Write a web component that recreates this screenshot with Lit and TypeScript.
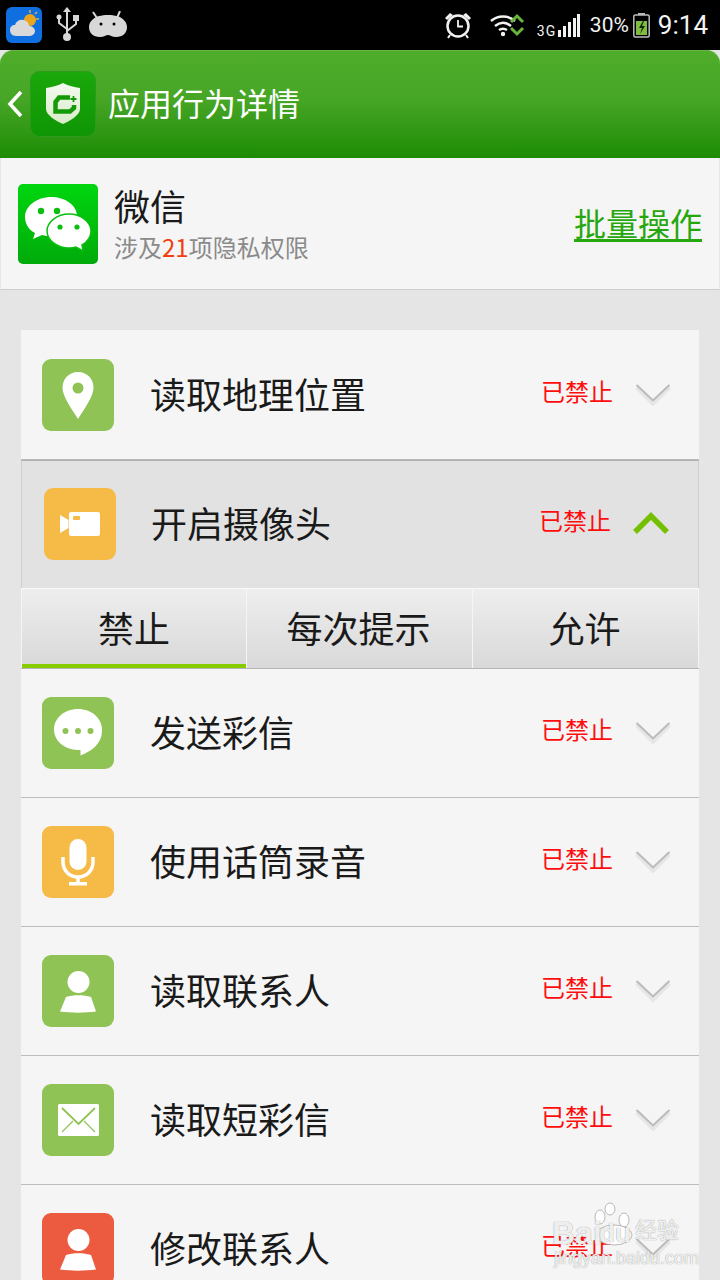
import { LitElement, css, html, svg } from "lit";
import { customElement } from "lit/decorators.js";

const GREEN = "#90c355";
const ORANGE = "#f6bb47";
const RED = "#ec5a3f";

const pinIcon = svg`<path d="M36 13c-9 0-15.500 7-15.500 15.500C20.500 38 30 50 36 60c6-10 15.500-22 15.500-31.500C51.500 20 45 13 36 13z" fill="#fff"/><circle cx="36" cy="29" r="5.500" fill="${GREEN}"/>`;
const cameraIcon = svg`<path d="M16 27l8.500 5v8L16 45z" fill="#fff"/><rect x="25" y="24" width="31" height="24" rx="2" fill="#fff"/><rect x="29" y="28" width="7" height="4" rx="1" fill="${ORANGE}"/>`;
const chatIcon = svg`<path d="M36 12c-13.500 0-24 9-24 20.500 0 11 10 20 24 20.500l2.500 0 0 5.500c6-2.500 12.500-6 16-10.500 3.500-4 5.500-8 5.500-15.500C60 21 49.500 12 36 12z" fill="#fff"/><circle cx="23.500" cy="34" r="3" fill="${GREEN}"/><circle cx="36" cy="34" r="3" fill="${GREEN}"/><circle cx="48.500" cy="34" r="3" fill="${GREEN}"/>`;
const micIcon = svg`<rect x="27.500" y="13" width="17" height="31" rx="8.500" fill="#fff"/><path d="M21 31v5c0 8.500 6.500 15 15 15s15-6.500 15-15v-5" fill="none" stroke="#fff" stroke-width="3.500"/><path d="M36 51v8" stroke="#fff" stroke-width="3.500"/><rect x="27" y="56" width="18" height="3.500" fill="#fff"/>`;
const personIcon = svg`<circle cx="36.500" cy="27" r="11" fill="#fff"/><path d="M24 42c7-2.500 18-2.500 25 0l5 14.500c-11 1.500-25 1.500-36 0z" fill="#fff"/>`;
const mailIcon = svg`<rect x="16" y="20" width="41" height="32" rx="1.500" fill="#fff"/><path d="M20 24l16.500 16L53 24" fill="none" stroke="${GREEN}" stroke-width="1.800"/><path d="M20 48l11-11M53 48L42 37" fill="none" stroke="${GREEN}" stroke-width="1.200"/>`;

interface Perm {
  label: string;
  color: string;
  icon: unknown;
}

const before: Perm = { label: "读取地理位置", color: GREEN, icon: pinIcon };
const open: Perm = { label: "开启摄像头", color: ORANGE, icon: cameraIcon };
const after: Perm[] = [
  { label: "发送彩信", color: GREEN, icon: chatIcon },
  { label: "使用话筒录音", color: ORANGE, icon: micIcon },
  { label: "读取联系人", color: GREEN, icon: personIcon },
  { label: "读取短彩信", color: GREEN, icon: mailIcon },
  { label: "修改联系人", color: RED, icon: personIcon },
];

@customElement("app-root")
export class AppRoot extends LitElement {
  static styles = css`
    :host {
      display: block;
      width: 720px;
      height: 1280px;
      overflow: hidden;
      position: relative;
      background: #e5e5e5;
      font-family: "Noto Sans CJK SC", "Liberation Sans", sans-serif;
      color: #1a1a1a;
    }
    svg {
      display: block;
      flex: none;
    }

    .status {
      height: 50px;
      background: #000;
      display: flex;
      align-items: center;
      color: #f2f2f2;
      font-family: Roboto, "Liberation Sans", sans-serif;
    }
    .usb {
      margin-left: 13px;
    }
    .droid {
      margin-left: 9px;
    }
    .alarm {
      margin-left: auto;
    }
    .wifi {
      margin-left: 18px;
    }
    .net {
      font-size: 14px;
      width: 20px;
      margin-left: 11px;
      margin-top: 12px;
      letter-spacing: 1px;
      line-height: 14px;
    }
    .bars {
      margin-left: 1px;
    }
    .pct {
      font-size: 21px;
      margin-left: 10px;
    }
    .batt {
      margin-left: 4px;
    }
    .clock {
      font-size: 26px;
      margin-left: 8px;
      margin-right: 12px;
    }

    .title-bar {
      height: 108px;
      box-sizing: border-box;
      border-radius: 14px 14px 0 0;
      background: linear-gradient(#4fad2b, #47a626 45%, #1d8c05);
      box-shadow: inset 0 1px 0 #62b83f;
      display: flex;
      align-items: center;
      padding-left: 7px;
      color: #fff;
      font-size: 32px;
    }
    .title-bar span {
      margin-bottom: 4px;
    }
    .shield {
      margin-left: 6px;
      margin-right: 12px;
    }

    .app {
      height: 132px;
      box-sizing: border-box;
      background: #f5f5f5;
      border-left: 1px solid #e6e6e6;
      border-right: 1px solid #e6e6e6;
      border-bottom: 1px solid #cfcfcf;
      display: flex;
      align-items: center;
      padding: 0 17px;
    }
    .app-text {
      margin-left: 16px;
      flex: 1;
    }
    .app-name {
      font-size: 36px;
      line-height: 44px;
      margin-top: -3px;
    }
    .app-sub {
      font-size: 24px;
      line-height: 30px;
      color: #8a8a8a;
      margin-top: 5px;
    }
    .app-sub b {
      font-weight: 400;
      color: #f0400f;
    }
    .bulk {
      font-size: 32px;
      color: #27a70e;
      text-decoration: underline;
      text-underline-offset: 3px;
      margin-bottom: 4px;
    }

    .list {
      margin: 40px 21px 0;
    }
    .row {
      height: 129px;
      box-sizing: border-box;
      background: #f5f5f5;
      border-bottom: 1px solid #bdbdbd;
      display: flex;
      align-items: center;
      padding-left: 21px;
      padding-right: 28px;
    }
    .row.first {
      height: 130px;
      padding-top: 1px;
      border-bottom: 1px solid #b8b8b8;
    }
    .row.expanded {
      height: 128px;
      background: #e2e2e2;
      border-top: 1px solid #b0b0b0;
      border-bottom: none;
      border-left: 1px solid #cfcfcf;
      border-right: 1px solid #cfcfcf;
      padding-left: 22px;
      padding-right: 29px;
      padding-bottom: 1px;
    }
    .badge {
      width: 72px;
      height: 72px;
      border-radius: 9px;
      flex: none;
    }
    .label {
      flex: 1;
      margin-left: 36px;
      margin-bottom: 4px;
      font-size: 36px;
      line-height: 48px;
    }
    .expanded .label {
      margin-left: 35px;
    }
    .state {
      font-size: 24px;
      line-height: 30px;
      color: #ff0d0d;
      margin-right: 22px;
      margin-bottom: 9px;
    }
    .chev {
      margin-bottom: 2px;
    }

    .tabs {
      height: 81px;
      box-sizing: border-box;
      display: grid;
      grid-template-columns: 224px 225px 1fr;
      gap: 1px;
      padding: 0 1px;
      background: #f5f5f5;
      border-bottom: 1px solid #b5b5b5;
    }
    .tab {
      box-sizing: border-box;
      background: linear-gradient(#eeeeee, #d9d9d9);
      border-top: 1px solid #fafafa;
      display: flex;
      align-items: center;
      justify-content: center;
      font-size: 36px;
      padding-bottom: 3px;
      padding-right: 2px;
    }
    .tab.on {
      border-bottom: 4px solid #88cc00;
      padding-bottom: 0;
      padding-right: 0;
    }

    .mark {
      position: absolute;
      left: 551px;
      top: 1200px;
      width: 135px;
      height: 78px;
      color: rgba(255, 255, 255, 0.9);
      text-shadow: 0 0 1px rgba(110, 110, 110, 0.9);
      font-family: "Liberation Sans", "Noto Sans CJK SC", sans-serif;
    }
    .mark svg {
      position: absolute;
      left: 34px;
      top: 2px;
    }
    .mark span {
      position: absolute;
      white-space: nowrap;
    }
    .mark-bai {
      left: 1px;
      top: 15px;
      font-size: 32px;
      line-height: 36px;
      font-weight: 700;
    }
    .mark-du {
      left: 48px;
      top: 18px;
      font-size: 26px;
      line-height: 30px;
      font-weight: 700;
    }
    .mark-jy {
      left: 84px;
      top: 16px;
      font-size: 22px;
      line-height: 30px;
    }
    .mark-url {
      left: 3px;
      top: 47px;
      font-size: 18px;
      line-height: 22px;
    }
  `;

  private badge(p: Perm) {
    return html`<svg class="badge" style="background:${p.color}" viewBox="0 0 72 72">${p.icon}</svg>`;
  }

  private chevron(up: boolean) {
    if (up) {
      return html`<svg class="chev" width="36" height="24" viewBox="0 0 36 24">
        <path d="M2 21L18 5l16 16" fill="none" stroke="#74c000" stroke-width="5.500" />
      </svg>`;
    }
    return html`<svg class="chev" width="36" height="24" viewBox="0 0 36 24">
      <path d="M2 5l16 16L34 5" fill="none" stroke="#e6e6e6" stroke-width="5" />
      <path d="M1.500 3L18 18.500 34.500 3" fill="none" stroke="#bcbcbc" stroke-width="2" />
    </svg>`;
  }

  private row(p: Perm, cls = "") {
    const up = cls === "expanded";
    return html`<div class="row ${cls}">
      ${this.badge(p)}
      <span class="label">${p.label}</span>
      <span class="state">已禁止</span>
      ${this.chevron(up)}
    </div>`;
  }

  render() {
    return html`
      <div class="status">
        <svg width="36" height="36" viewBox="0 0 36 36" style="margin-left:6px">
          <rect width="36" height="36" rx="6" fill="#0f6fe0" />
          <circle cx="24" cy="13" r="6" fill="#eba51c" />
          <path d="M24 3v3M33 12h-3M31 5l-2 2" stroke="#d9b04a" stroke-width="1.500" />
          <path d="M10 29c-4 0-6-3-6-6 0-3 2-5 5-5 1-4 5-6 9-5 3 1 5 3 5 6 3 0 6 2 6 5s-3 5-6 5z" fill="#d9d9d9" />
        </svg>
        <svg class="usb" width="25" height="36" viewBox="0 0 25 36">
          <path d="M12 5v24M12 22L4 16v-4M12 24l9-7v-5" fill="none" stroke="#d8d8d8" stroke-width="2" />
          <path d="M12 0l4 5H8z" fill="#d8d8d8" />
          <circle cx="4" cy="10" r="2.500" fill="#d8d8d8" />
          <rect x="18" y="8" width="6" height="6" fill="#d8d8d8" />
          <circle cx="12" cy="30" r="4" fill="#d8d8d8" />
        </svg>
        <svg class="droid" width="38" height="28" viewBox="0 0 38 28">
          <path d="M4 1l4 6M31 0l-3 7" stroke="#d8d8d8" stroke-width="2" />
          <path d="M10 5c5-1.500 13-1.500 18 0 6 2 10 6 10 11 0 6-4 10-11 10-4 0-6-2-8-2s-4 2-8 2C4 26 0 22 0 16 0 11 4 7 10 5z" fill="#d8d8d8" />
          <circle cx="12" cy="13" r="1.500" fill="#000" />
          <circle cx="25" cy="13" r="1.500" fill="#000" />
        </svg>
        <svg class="alarm" width="28" height="28" viewBox="0 0 28 28">
          <circle cx="14" cy="15" r="10.500" fill="none" stroke="#f2f2f2" stroke-width="2.500" />
          <path d="M14 9v6.500h5" fill="none" stroke="#f2f2f2" stroke-width="1.800" />
          <path d="M1 7l5-5 3 2-6 5zM27 7l-5-5-3 2 6 5z" fill="#f2f2f2" />
          <path d="M6 24l-2 3M22 24l2 3" stroke="#f2f2f2" stroke-width="2" />
        </svg>
        <svg class="wifi" width="36" height="24" viewBox="0 0 36 24">
          <path d="M1 8c7-6 17-6 24 0M5 13c5-4 11-4 16 0M9 17c3-2 5-2 8 0" fill="none" stroke="#f2f2f2" stroke-width="2.500" />
          <circle cx="13" cy="21" r="2.200" fill="#f2f2f2" />
          <path d="M21 9l6-6 6 6M21 15l6 6 6-6" fill="none" stroke="#67b53a" stroke-width="3" />
        </svg>
        <span class="net">3G</span>
        <svg class="bars" width="22" height="24" viewBox="0 0 22 24">
          <path d="M0 17h3v7H0zM5 13h3v11H5zM10 9h3v15h-3zM15 5h3v19h-3zM19 1h3v23h-3z" fill="#f2f2f2" />
        </svg>
        <span class="pct">30%</span>
        <svg class="batt" width="17" height="26" viewBox="0 0 17 26">
          <path d="M5 1h7v2H5z" fill="#bdbdbd" />
          <rect x="0.800" y="3" width="15.400" height="22" rx="1.500" fill="none" stroke="#bdbdbd" stroke-width="1.500" />
          <rect x="3" y="9" width="11" height="14" fill="#7fbc3f" />
          <path d="M10 9l-4 7h3l-2 6 5-8h-3l2-5z" fill="#10280a" />
        </svg>
        <span class="clock">9:14</span>
      </div>

      <div class="title-bar">
        <svg width="17" height="28" viewBox="0 0 17 28">
          <path d="M14 2L3 14l11 12" fill="none" stroke="#fff" stroke-width="3.600" />
        </svg>
        <svg class="shield" width="66" height="66" viewBox="0 0 66 66">
          <defs>
            <linearGradient id="sb" x1="0" y1="0" x2="0" y2="1">
              <stop offset="0" stop-color="#1aa80a" />
              <stop offset="1" stop-color="#0f9505" />
            </linearGradient>
            <linearGradient id="sf" x1="0" y1="0" x2="0" y2="1">
              <stop offset="0" stop-color="#f4faf0" />
              <stop offset="1" stop-color="#d9ecc9" />
            </linearGradient>
          </defs>
          <rect x="0.500" y="0.500" width="65" height="65" rx="9" fill="url(#sb)" stroke="#2c9a1d" />
          <path d="M16 17c6-1 11-2 17-5 6 3 11 4 17 5v21c0 6-10 12-17 15-7-3-17-9-17-15z" fill="url(#sf)" />
          <path d="M40 26.500H29L25.500 31v9.500H40l4-3.500V34" fill="none" stroke="#149a08" stroke-width="4.500" />
          <path d="M43.500 25v6M40.500 28h6" stroke="#149a08" stroke-width="1.800" />
        </svg>
        <span>应用行为详情</span>
      </div>

      <div class="app">
        <svg width="80" height="80" viewBox="0 0 80 80">
          <defs>
            <linearGradient id="wx" x1="0" y1="0" x2="0" y2="1">
              <stop offset="0" stop-color="#00d60f" />
              <stop offset="1" stop-color="#00aa0a" />
            </linearGradient>
          </defs>
          <rect width="80" height="80" rx="5" fill="url(#wx)" />
          <path d="M33 13C19 13 7 22 7 33c0 7 4 13 10 16l-2 6 9-4c3 1 6 1 9 1 14 0 26-9 26-20S47 13 33 13z" fill="#fff" />
          <circle cx="23" cy="27" r="3.200" fill="#0abf10" />
          <circle cx="39" cy="27" r="3.200" fill="#0abf10" />
          <path d="M51 30c-12 0-22 8-22 17s10 17 22 17c2 0 5 0 7-1l7 4-1-6c5-3 9-8 9-14 0-9-10-17-22-17z" fill="#fff" stroke="#0abf10" stroke-width="1.500" />
          <circle cx="42" cy="43" r="2.600" fill="#0abf10" />
          <circle cx="59" cy="43" r="2.600" fill="#0abf10" />
        </svg>
        <div class="app-text">
          <div class="app-name">微信</div>
          <div class="app-sub">涉及<b>21</b>项隐私权限</div>
        </div>
        <span class="bulk">批量操作</span>
      </div>

      <div class="list">
        ${this.row(before, "first")} ${this.row(open, "expanded")}
        <div class="tabs">
          <div class="tab on">禁止</div>
          <div class="tab">每次提示</div>
          <div class="tab">允许</div>
        </div>
        ${after.map((p) => this.row(p))}
      </div>

      <div class="mark">
        <svg width="50" height="44" viewBox="0 0 50 44" fill="rgba(255,255,255,.9)" stroke="rgba(140,140,140,.6)">
          <ellipse cx="15" cy="15" rx="5" ry="7" />
          <ellipse cx="25" cy="7" rx="5" ry="6" />
          <ellipse cx="39" cy="18" rx="5" ry="7" />
          <ellipse cx="29" cy="33" rx="18" ry="10" />
        </svg>
        <span class="mark-bai">Bai</span>
        <span class="mark-du">du</span>
        <span class="mark-jy">经验</span>
        <span class="mark-url">jingyan.baidu.com</span>
      </div>
    `;
  }
}
